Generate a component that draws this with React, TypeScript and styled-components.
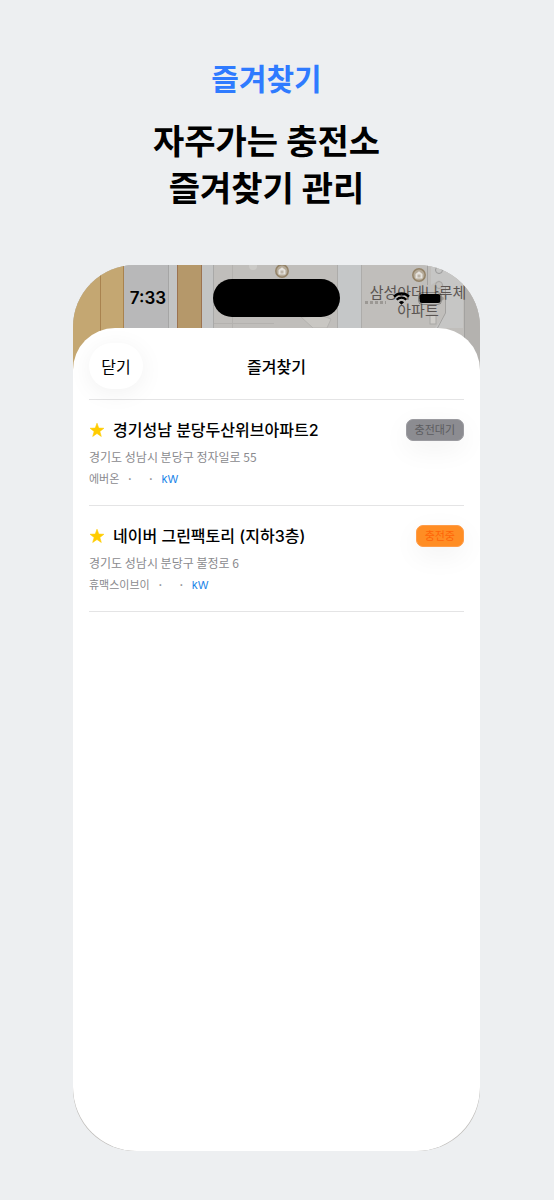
import React from "react";
import styled, { createGlobalStyle } from "styled-components";

const GlobalStyle = createGlobalStyle`
  *, *::before, *::after { box-sizing: border-box; }
  body {
    margin: 0;
    background: #edeff1;
    color: #000;
    font-family: Inter, "Noto Sans CJK KR", sans-serif;
  }
  h1, h2, h3, p, ul { margin: 0; padding: 0; }
`;

const Page = styled.main`
  display: flex;
  flex-direction: column;
  min-height: 100vh;
  padding: 57px 74px 49px 73px;
`;

const Hero = styled.header`
  padding-right: 20px;
  margin-bottom: 53px;
  text-align: center;
  font-weight: 700;
`;

const Eyebrow = styled.p`
  margin-bottom: 17px;
  font-size: 30px;
  line-height: 44px;
  color: #2f7bff;
`;

const Headline = styled.h1`
  font-size: 34px;
  line-height: 47px;
`;

const Phone = styled.section`
  position: relative;
  display: flex;
  flex: 1;
  flex-direction: column;
  overflow: hidden;
  border-radius: 62px;
  background: #c0bebb;
`;

const MapArt = styled.svg`
  position: absolute;
  top: 0;
  left: 0;
  width: 100%;
  height: 120px;
`;

const MapLabel = styled.p`
  position: absolute;
  top: 19px;
  right: 12px;
  width: 100px;
  text-align: center;
  font-size: 15px;
  line-height: 18px;
  color: #5b5552;
`;

const StatusBar = styled.div`
  position: relative;
  display: grid;
  grid-template-columns: 1fr 127px 1fr;
  align-items: center;
  height: 63px;
  padding-top: 3px;
`;

const Clock = styled.time`
  padding-left: 10px;
  text-align: center;
  font-size: 17px;
  font-weight: 600;
`;

const Island = styled.div`
  height: 38px;
  border-radius: 19px;
  background: #000;
`;

const Indicators = styled.div`
  display: flex;
  align-items: center;
  justify-content: center;
  gap: 8px;
  padding-left: 16px;
`;

const Sheet = styled.div`
  position: relative;
  flex: 1;
  padding: 0 16px;
  border-radius: 42px 42px 64px 64px;
  background: #fff;
`;

const SheetHeader = styled.header`
  display: grid;
  grid-template-columns: 1fr auto 1fr;
  align-items: center;
  height: 72px;
  padding-top: 4px;
  border-bottom: 1px solid #e4e4e5;
`;

const CloseButton = styled.button`
  justify-self: start;
  width: 54px;
  height: 46px;
  padding: 0;
  border: 0;
  border-radius: 23px;
  background: #fff;
  box-shadow: 0 4px 24px rgba(0, 0, 0, 0.06);
  color: #000;
  font: inherit;
  font-size: 16px;
`;

const SheetTitle = styled.h2`
  font-size: 16px;
  font-weight: 500;
`;

const StationList = styled.ul`
  list-style: none;
`;

const StationRow = styled.li`
  padding: 16px 0 15px;
  border-bottom: 1px solid #e4e4e5;
`;

const TitleLine = styled.div`
  display: flex;
  align-items: center;
  gap: 8px;
  height: 28px;
`;

const StationName = styled.h3`
  flex: 1;
  font-size: 16px;
  font-weight: 500;
  line-height: 28px;
  white-space: nowrap;
`;

const Badge = styled.span<{ $active?: boolean }>`
  padding: 0 8px;
  border: 1px solid ${(p) => (p.$active ? "#ff9c48" : "#9b9ba0")};
  border-radius: 7px;
  background: ${(p) => (p.$active ? "#ff8d24" : "#8c8c91")};
  box-shadow: 0 8px 28px rgba(0, 0, 0, 0.06);
  color: ${(p) => (p.$active ? "#ff6408" : "#5c5c60")};
  font-size: 11px;
  line-height: 20px;
  white-space: nowrap;
`;

const Address = styled.p`
  padding-top: 1px;
  font-family: "Noto Sans CJK KR", sans-serif;
  font-size: 12px;
  line-height: 24px;
  color: #8a8a8e;
`;

const Meta = styled.p`
  display: flex;
  gap: 8px;
  font-size: 11px;
  line-height: 21px;
  color: #8a8a8e;
`;

const Dot = styled.span`
  width: 5px;
  text-align: center;
  font-weight: 700;
`;

const Power = styled.span`
  color: #1a84e8;
`;

const StarIcon = () => (
  <svg width="16" height="16" viewBox="0 0 16 16" aria-hidden="true">
    <path
      d="M8 1.200l1.750 4.900 5.200.150-4.100 3.200 1.450 5L8 11.500l-4.300 2.950 1.450-5-4.100-3.200 5.200-.150z"
      fill="#fc0"
      stroke="#fc0"
      strokeWidth=".6"
      strokeLinejoin="round"
    />
  </svg>
);

const WifiIcon = () => (
  <svg width="17" height="13" viewBox="0 0 17 13" aria-hidden="true">
    <g fill="none" stroke="#000" strokeWidth="2.300">
      <path d="M1 4.600a10.600 10.600 0 0 1 15 0" />
      <path d="M3.700 7.700a6.800 6.800 0 0 1 9.600 0" />
    </g>
    <path d="M8.500 12.800L5.900 10.200a3.700 3.700 0 0 1 5.200 0z" />
  </svg>
);

const BatteryIcon = () => (
  <svg width="26" height="13" viewBox="0 0 26 13" aria-hidden="true">
    <rect x=".5" y=".5" width="23" height="12" rx="4" fill="none" stroke="#000" strokeOpacity=".3" />
    <rect x="1.500" y="2" width="21" height="9" rx="2.500" />
    <path d="M24.500 4.500v4c1.300-.5 1.300-3.500 0-4z" fillOpacity=".4" />
  </svg>
);

const HomePin = ({ x, y }: { x: number; y: number }) => (
  <g transform={`translate(${x} ${y})`}>
    <circle r="6.200" fill="#b5aa98" stroke="#948368" strokeWidth="1.500" />
    <path d="M-3.500-1L0-3.800 3.500-1v4.500h-7z" fill="#e6e3de" />
    <path d="M-1.500-.5h3v3h-3z" fill="#bdb5a8" />
  </g>
);

const MapBackdrop = () => (
  <MapArt viewBox="0 0 407 120" preserveAspectRatio="xMinYMin slice" aria-hidden="true">
    <rect width="407" height="120" fill="#c0bebb" />
    <rect width="51" height="120" fill="#c4a772" />
    <path d="M27.500 0v120M50.500 0v120" stroke="#a9834f" />
    <rect x="51" width="44" height="120" fill="#b8b8b9" />
    <path d="M95.500 0v120" stroke="#a5a5a5" />
    <rect x="96" width="8" height="120" fill="#c3c4c4" />
    <rect x="104" width="25" height="120" fill="#b5986a" />
    <path d="M104.500 0v120M128.500 0v120" stroke="#9c7350" />
    <rect x="129" width="11" height="120" fill="#c3c4c4" />
    <path d="M140.500 0v120" stroke="#a9a9a8" />
    <path d="M159.500 0v63M141 58.500h60" stroke="#b4b2af" />
    <circle cx="180" cy="1" r="4" fill="#cbcac7" />
    <path d="M228 52l12 11h14l4-9-8-3z" fill="#c9c7c3" stroke="#b4b2af" />
    <rect x="264" width="24" height="120" fill="#c5c7c8" />
    <path d="M264.500 0v120M288.500 0v120" stroke="#adacaa" />
    <path d="M358 0v20l8-5 6 7v28l-10 13h28V0z" fill="#c6c6c5" />
    <path d="M354.500 0v20M372.500 22v26l-8 15M391.500 20v100" fill="none" stroke="#a3a2a0" />
    <circle cx="366" cy="5" r="3.500" fill="none" stroke="#999" />
    <circle cx="366" cy="20" r="3.500" fill="none" stroke="#a3a2a0" />
    <rect x="392" y="20" width="15" height="100" fill="#b4b2af" />
    <rect x="357" y="50" width="6" height="9" fill="#cfcdc9" stroke="#a8a7a5" />
    <path d="M292 37.500h21" stroke="#9b9894" strokeWidth="3" strokeDasharray="3 2" />
    <HomePin x={209} y={6} />
    <HomePin x={346} y={10} />
  </MapArt>
);

type Station = {
  name: string;
  address: string;
  operator: string;
  status: string;
  charging?: boolean;
};

const stations: Station[] = [
  {
    name: "경기성남 분당두산위브아파트2",
    address: "경기도 성남시 분당구 정자일로 55",
    operator: "에버온",
    status: "충전대기",
  },
  {
    name: "네이버 그린팩토리 (지하3층)",
    address: "경기도 성남시 분당구 불정로 6",
    operator: "휴맥스이브이",
    status: "충전중",
    charging: true,
  },
];

export default function App() {
  return (
    <>
      <GlobalStyle />
      <Page>
        <Hero>
          <Eyebrow>즐겨찾기</Eyebrow>
          <Headline>
            자주가는 충전소
            <br />
            즐겨찾기 관리
          </Headline>
        </Hero>
        <Phone>
          <MapBackdrop />
          <MapLabel>
            삼성아데나루체
            <br />
            아파트
          </MapLabel>
          <StatusBar>
            <Clock>7:33</Clock>
            <Island />
            <Indicators>
              <WifiIcon />
              <BatteryIcon />
            </Indicators>
          </StatusBar>
          <Sheet>
            <SheetHeader>
              <CloseButton type="button">닫기</CloseButton>
              <SheetTitle>즐겨찾기</SheetTitle>
            </SheetHeader>
            <StationList>
              {stations.map((s) => (
                <StationRow key={s.name}>
                  <TitleLine>
                    <StarIcon />
                    <StationName>{s.name}</StationName>
                    <Badge $active={s.charging}>{s.status}</Badge>
                  </TitleLine>
                  <Address>{s.address}</Address>
                  <Meta>
                    <span>{s.operator}</span>
                    <Dot>·</Dot>
                    <span />
                    <Dot>·</Dot>
                    <Power>kW</Power>
                  </Meta>
                </StationRow>
              ))}
            </StationList>
          </Sheet>
        </Phone>
      </Page>
    </>
  );
}
